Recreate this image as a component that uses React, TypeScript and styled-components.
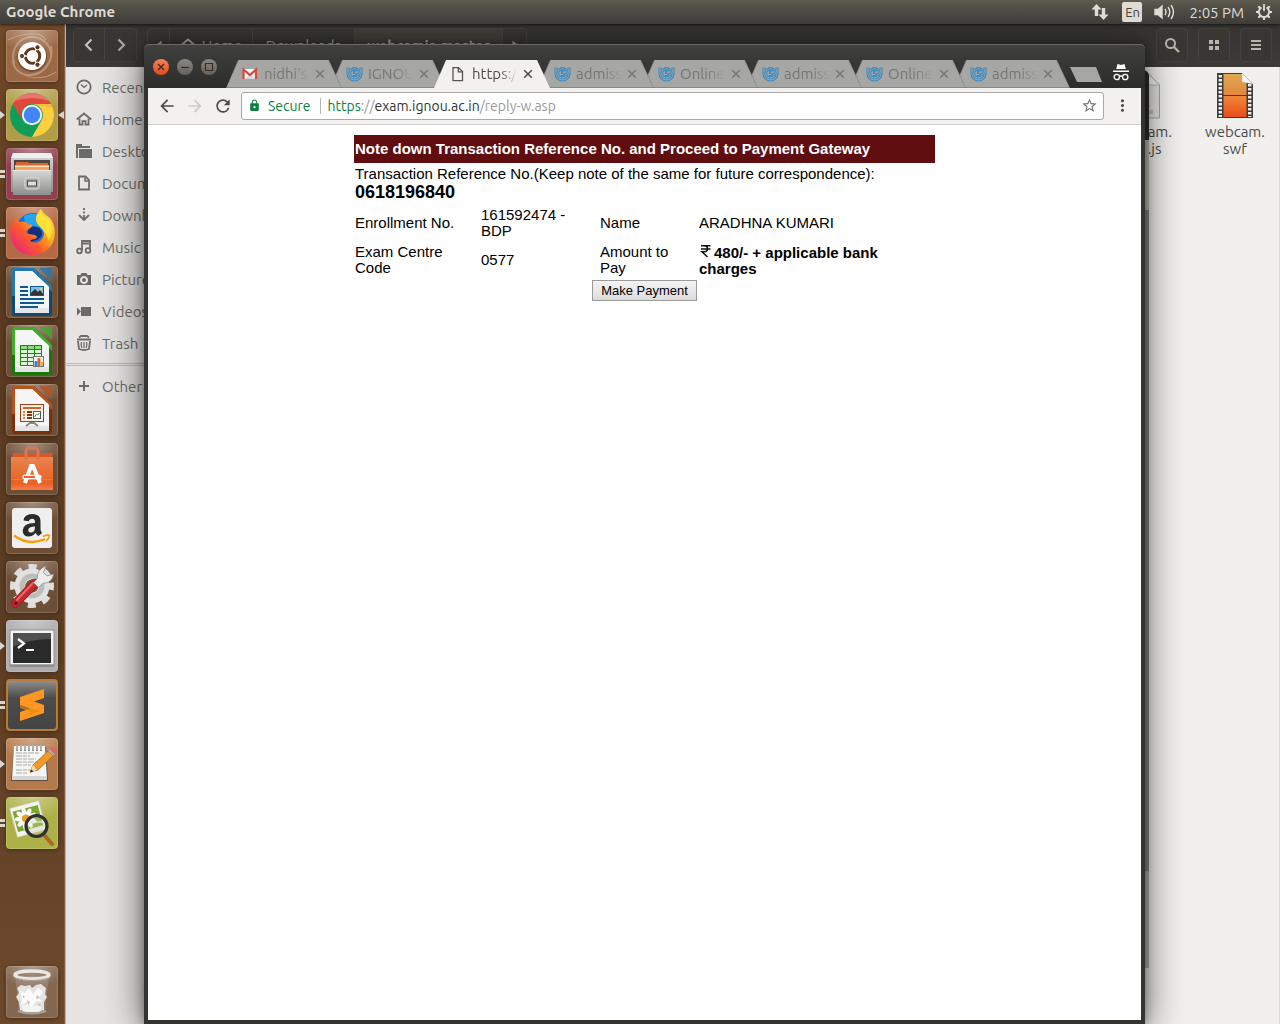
import React from "react";
import styled, { createGlobalStyle, css } from "styled-components";
import {
  MdArrowBack,
  MdArrowForward,
  MdLock,
  MdMoreVert,
  MdRefresh,
  MdStarBorder,
} from "react-icons/md";

const ui = `"Ubuntu", "Open Sans", "Noto Sans", sans-serif`;
const page = `"Liberation Sans", Arial, sans-serif`;

const GlobalStyle = createGlobalStyle`
  * { box-sizing: border-box; }
  body { margin: 0; font-family: ${ui}; font-size: 15px; overflow: hidden; }
  button { font-family: inherit; margin: 0; }
  svg { display: block; }
`;

/* ---------- desktop ---------- */

const Desktop = styled.div`
  position: relative;
  display: grid;
  grid-template-rows: 24px 1fr;
  height: 100vh;
  overflow: hidden;
  background: #f1f0ee;
`;

const TopPanel = styled.header`
  position: relative;
  z-index: 4;
  display: flex;
  align-items: center;
  padding: 0 8px 0 6px;
  color: #dfdbd2;
  background: linear-gradient(#5e5b50, #55524a 20%, #3d3c38);
  box-shadow: 0 1px 3px rgba(0, 0, 0, 0.6);
  line-height: 24px;
`;

const PanelTitle = styled.strong`
  flex: 1;
`;

const PanelItems = styled.div`
  display: flex;
  align-items: center;
`;

const PanelButton = styled.button<{ $gap: number }>`
  display: flex;
  align-items: center;
  height: 24px;
  padding: 0;
  margin-left: ${(p) => p.$gap}px;
  border: 0;
  background: none;
  color: inherit;
  font-size: 15px;
`;

const Keyboard = styled.span`
  width: 20px;
  height: 20px;
  border-radius: 2px;
  background: #dfdbd2;
  color: #45433d;
  font-size: 13px;
  line-height: 21px;
  text-align: center;
`;

const Workspace = styled.div`
  display: grid;
  grid-template-columns: 66px 1fr;
  min-height: 0;
`;

/* ---------- launcher ---------- */

const LauncherBar = styled.nav`
  display: flex;
  flex-direction: column;
  gap: 7px;
  padding: 6px 0 6px 6px;
  border-right: 1px solid #b9b2ab;
  box-shadow: inset -1px 0 #7e6149;
  background: linear-gradient(#744a29, #5a3a20 25%, #5c3c22 55%, #6d492c);
`;

const Tile = styled.button<{ $color: string; $rim?: string; $last?: boolean }>`
  position: relative;
  flex: none;
  width: 52px;
  height: 52px;
  padding: 0;
  border: 0;
  border-radius: 4px;
  margin-top: ${(p) => (p.$last ? "auto" : "0")};
  background:
    radial-gradient(ellipse 36px 22px at 50% 0, rgba(255, 255, 255, 0.4), rgba(255, 255, 255, 0.06)),
    ${(p) => p.$color};
  box-shadow:
    inset 0 0 0 ${(p) => (p.$rim ? 2 : 1)}px ${(p) => p.$rim ?? "rgba(255,255,255,0.16)"},
    0 1px 5px rgba(0, 0, 0, 0.35);
`;

const Marks = styled.span<{ $kind: "one" | "two" }>`
  position: absolute;
  left: -6px;
  top: 22px;
  width: 5px;
  height: 8px;
  ${(p) =>
    p.$kind === "one"
      ? css`
          background: #d9d5d0;
          clip-path: polygon(0 0, 100% 50%, 0 100%);
        `
      : css`
          border: solid #d9d5d0;
          border-width: 3px 0;
        `}
`;

const FocusMark = styled.span`
  position: absolute;
  right: -6px;
  top: 22px;
  width: 6px;
  height: 8px;
  background: #d9d5d0;
  clip-path: polygon(100% 0, 0 50%, 100% 100%);
`;

/* ---------- file manager ---------- */

const Files = styled.section`
  display: grid;
  grid-template-rows: 43px 1fr;
  min-width: 0;
`;

const FilesHeader = styled.div`
  display: flex;
  gap: 10px;
  padding: 4px 8px 5px 7px;
  color: #b8b5a8;
  background: linear-gradient(#353430, #3c3b37);
`;

const ButtonGroup = styled.div`
  display: flex;
  height: 34px;
  border: 1px solid #44423e;
  border-radius: 4px;
  background: #383733;
`;

const HeaderButton = styled.button<{ $width: number; $active?: boolean }>`
  display: flex;
  align-items: center;
  justify-content: center;
  gap: 6px;
  width: ${(p) => p.$width}px;
  padding: 0;
  border: 0;
  border-right: 1px solid #48463f;
  background: ${(p) => (p.$active ? "#41403a" : "none")};
  color: #aeaca1;
  font-size: 15px;
  font-weight: ${(p) => (p.$active ? 700 : 400)};
  &:last-child { border-right: 0; }
`;

const HeaderSpacer = styled.div`
  flex: 1;
`;

const SquareButton = styled.button`
  display: flex;
  align-items: center;
  justify-content: center;
  width: 32px;
  height: 34px;
  padding: 0;
  border: 1px solid #44423e;
  border-radius: 4px;
  background: #383733;
  color: #b8b5a8;
`;

const FilesBody = styled.div`
  display: grid;
  grid-template-columns: 200px 1fr;
`;

const Places = styled.ul`
  margin: 0;
  padding: 4px 0 0;
  list-style: none;
  background: #e6e5e3;
`;

const Place = styled.li<{ $divided?: boolean }>`
  ${(p) =>
    p.$divided &&
    css`
      margin-top: 4px;
      padding-top: 4px;
      border-top: 3px double #bdbbb8;
    `}
`;

const PlaceLink = styled.a`
  display: flex;
  align-items: center;
  gap: 10px;
  height: 32px;
  padding-left: 10px;
  color: #6b6b67;
  text-decoration: none;
  white-space: nowrap;
`;

const FileGrid = styled.div`
  display: flex;
  justify-content: flex-end;
  gap: 5px;
  padding: 5px 0 0;
  border-right: 1px solid #dcdad7;
  background: #f1f0ee;
`;

const FileItem = styled.figure`
  display: flex;
  flex-direction: column;
  align-items: center;
  gap: 4px;
  width: 88px;
  margin: 0;
  color: #4a4a48;
  line-height: 17px;
  text-align: center;
`;

/* ---------- windows ---------- */

const BackWindow = styled.div`
  position: absolute;
  z-index: 1;
  top: 70px;
  right: 131px;
  bottom: 56px;
  display: flex;
  flex-direction: column;
  width: 12px;
  border-radius: 0 6px 0 0;
  overflow: hidden;
`;

const Band = styled.span<{ $color: string; $height?: number }>`
  flex: ${(p) => (p.$height ? `0 0 ${p.$height}px` : "1")};
  background: ${(p) => p.$color};
`;

const Browser = styled.main`
  position: absolute;
  z-index: 2;
  inset: 44px 135px 0 144px;
  display: grid;
  grid-template-rows: 44px 37px 1fr;
  padding: 0 4px 4px 4px;
  border-radius: 5px 5px 0 0;
  background: #333330;
  box-shadow: 0 6px 38px rgba(0, 0, 0, 0.65), 0 0 10px rgba(0, 0, 0, 0.3);
`;

const TitleBar = styled.div`
  display: flex;
  align-items: flex-end;
  margin: 0 -4px;
  padding: 0 16px 0 9px;
  border-top: 1px solid #6a6966;
  border-radius: 5px 5px 0 0;
  background: linear-gradient(#40403e, #2c2c2a);
`;

const WindowButtons = styled.div`
  display: flex;
  gap: 8px;
  align-self: flex-end;
  margin-bottom: 13px;
`;

const WindowButton = styled.button<{ $close?: boolean }>`
  width: 16px;
  height: 16px;
  padding: 0;
  border: 0;
  border-radius: 50%;
  background: ${(p) =>
    p.$close ? "linear-gradient(#f4815c, #df4c1d)" : "linear-gradient(#8a8880, #64625b)"};
  color: #3a2a20;
`;

const TabStrip = styled.div`
  display: flex;
  margin-left: 9px;
`;

const Tab = styled.div<{ $active: boolean; $order: number }>`
  position: relative;
  z-index: ${(p) => (p.$active ? 20 : p.$order)};
  display: flex;
  align-items: center;
  width: 116px;
  height: 28px;
  margin-right: -12px;
  padding-left: 16px;
  background: ${(p) => (p.$active ? "#f2f1f0" : "#868684")};
  color: ${(p) => (p.$active ? "#4c4c4c" : "#757573")};
  clip-path: polygon(12px 0, calc(100% - 13px) 0, 100% 100%, 0 100%);
  &::before {
    content: "";
    position: absolute;
    z-index: -1;
    inset: 0 1px ${(p) => (p.$active ? 0 : 1)}px 1px;
    background: ${(p) => (p.$active ? "#f2f1f0" : "#a6a6a4")};
    clip-path: polygon(12px 0, calc(100% - 13px) 0, 100% 100%, 0 100%);
  }
`;

const TabLabel = styled.button`
  width: 50px;
  margin-left: 5px;
  padding: 0;
  border: 0;
  background: none;
  color: inherit;
  font-size: 15px;
  line-height: 20px;
  text-align: left;
  white-space: nowrap;
  mask-image: linear-gradient(90deg, #000 28px, transparent 45px);
`;

const TabClose = styled.button`
  margin-left: 1px;
  padding: 0;
  border: 0;
  background: none;
  color: inherit;
`;

const NewTab = styled.button`
  align-self: flex-end;
  width: 32px;
  height: 15px;
  margin: 0 0 6px 12px;
  padding: 0;
  border: 0;
  background: #a6a6a4;
  clip-path: polygon(0 0, 26px 0, 100% 100%, 7px 100%);
`;

const Incognito = styled.span`
  margin: 0 0 7px auto;
`;

const Toolbar = styled.div`
  display: flex;
  align-items: center;
  padding: 0 9px 1px 9px;
  border-bottom: 1px solid #cfcecc;
  background: #f2f1f0;
`;

const ToolButton = styled.button<{ $dim?: boolean }>`
  display: flex;
  justify-content: center;
  flex: none;
  width: 20px;
  margin-right: 8px;
  padding: 0;
  border: 0;
  background: none;
  color: ${(p) => (p.$dim ? "#cccbca" : "#4b4b4b")};
  &:last-child { margin: 0; }
`;

const Address = styled.div`
  display: flex;
  flex: 1;
  align-items: center;
  height: 28px;
  margin-right: 8px;
  padding: 0 5px 0 6px;
  border: 1px solid #a9a8a6;
  border-radius: 3px;
  background: #fff;
  color: #0b8043;
  font-size: 14px;
`;

const Secure = styled.span`
  margin-left: 7px;
  padding-right: 9px;
  border-right: 1px solid #b5b5b5;
  line-height: 16px;
`;

const Url = styled.div`
  flex: 1;
  margin-left: 7px;
  color: #9a9a9a;
  line-height: 20px;
  b { color: #333; font-weight: 400; }
  i { color: #0b8043; font-style: normal; }
`;

const StarButton = styled.button`
  padding: 0;
  border: 0;
  background: none;
  color: #757575;
`;

/* ---------- web page ---------- */

const Viewport = styled.div`
  padding: 10px 10px 0;
  overflow: auto;
  background: #fff;
`;

const Sheet = styled.table`
  width: 581px;
  max-width: 100%;
  margin: 0 auto;
  border-collapse: collapse;
  table-layout: fixed;
  color: #000;
  font-family: ${page};
  font-size: 15px;
  line-height: 16px;
  td, th { padding: 1px; text-align: left; font-weight: 400; }
`;

const Row = styled.tr<{ $height: number }>`
  height: ${(p) => p.$height}px;
`;

const Banner = styled.th`
  && { font-weight: 700; }
  background: #600d0f;
  color: #fff;
`;

const Reference = styled.b`
  display: block;
  font-size: 18px;
  line-height: 20px;
`;

const Amount = styled.b`
  svg { display: inline-block; margin-right: 1px; }
`;

const PayCell = styled.td`
  && { padding: 1px 0; text-align: center; }
`;

const PayButton = styled.button`
  && { font-family: ${page}; }
  height: 21px;
  padding: 0 8px;
  border: 1px solid #9a9a9a;
  border-radius: 0;
  background: linear-gradient(#f4f4f4, #dcdcdc);
  color: #000;
  font-size: 13px;
  line-height: 19px;
  vertical-align: top;
`;

/* ---------- drawings ---------- */

const Art = ({ children }: { children: React.ReactNode }) => (
  <svg width="52" height="52" viewBox="0 0 52 52" aria-hidden="true">
    {children}
  </svg>
);

const UbuntuArt = () => (
  <Art>
    <g fill="none" stroke="#fff" opacity=".28">
      <path d="M8 34C4 18 14 6 28 7c10 1 17 9 17 19" strokeWidth="2" />
      <path d="M45 16c3 14-6 28-20 29C14 46 7 38 7 30" strokeWidth="2" />
      <path d="M2 10C14 4 34 0 40 10M50 42c-12 8-30 8-38-2" strokeWidth="1.200" />
    </g>
    <circle cx="26" cy="27" r="15" fill="#3b220f" opacity=".35" />
    <circle cx="26" cy="26" r="14" fill="#fff" />
    <circle cx="26.500" cy="26" r="7.200" fill="none" stroke="#5c3a1f" strokeWidth="3" />
    <path d="M26.500 26H16M26.500 26l5-9M26.500 26l5 9" stroke="#fff" strokeWidth="1.300" />
    <circle cx="26.500" cy="26" r="5.700" fill="#fff" />
    <g fill="#5c3a1f" stroke="#fff">
      <circle cx="16" cy="26" r="2.600" />
      <circle cx="31.500" cy="17.300" r="2.600" />
      <circle cx="31.500" cy="34.700" r="2.600" />
    </g>
  </Art>
);

const ChromeArt = () => (
  <Art>
    <circle cx="26" cy="26" r="22" fill="#0f9d58" />
    <path d="M6.950 15A22 22 0 0 1 45.050 15H26a11 11 0 0 0-9.500 16.500z" fill="#e0483c" />
    <path d="M45.050 15A22 22 0 0 1 26 48l9.500-16.500A11 11 0 0 0 26 15z" fill="#ffcd40" />
    <path d="M26 15h19a22 22 0 0 1 2 4z" fill="#f1a92f" opacity=".5" />
    <path d="M9 12A22 22 0 0 1 43 12Q26 6 9 12z" fill="#fff" opacity=".25" />
    <circle cx="26" cy="26" r="10.200" fill="#f1f1f1" />
    <circle cx="26" cy="26" r="8.200" fill="#4285f4" />
  </Art>
);

const CabinetArt = () => (
  <Art>
    <defs>
      <linearGradient id="cab" x2="0" y2="1">
        <stop stopColor="#d8d8d6" />
        <stop offset="1" stopColor="#8e8e8c" />
      </linearGradient>
    </defs>
    <path d="M7 5h38l2 6v33H5V11z" fill="url(#cab)" />
    <path d="M7 5h38l2 5H5z" fill="#f0f0ee" />
    <path d="M8 12h36v10H8z" fill="#4a4542" />
    <path d="M10 14h12l1 1h19v7H9z" fill="#d8652b" />
    <path d="M9 17h34v5H9z" fill="#f5a55a" />
    <path d="M9 18.500h34" stroke="#fde3c0" />
    <path d="M7 22h38v25H7z" fill="url(#cab)" />
    <path d="M7 22.500h38" stroke="#ececea" />
    <rect x="19" y="30" width="14" height="11" rx="2" fill="#a9a9a7" stroke="#dededc" />
    <rect x="21.500" y="33" width="9" height="5" fill="#dedede" stroke="#444" />
  </Art>
);

const FirefoxArt = () => (
  <Art>
    <defs>
      <linearGradient id="fox" x1="1" y1="0" x2="0" y2="1">
        <stop stopColor="#fff44f" />
        <stop offset=".35" stopColor="#ffb31a" />
        <stop offset=".6" stopColor="#ff5a2a" />
        <stop offset="1" stopColor="#e0129a" />
      </linearGradient>
    </defs>
    <circle cx="27" cy="23" r="17" fill="#1673d6" />
    <path d="M18 9q10-5 18 1l-4 12-12 2z" fill="#25a5ee" />
    <path d="M22 20q14-3 14 8-5 8-14 6z" fill="#14307c" />
    <path
      d="M10 10c1 3 2 4 4 5 4-1 7 0 9 3 1-1 3-1 3 1-1 3-5 3-6 6 3 4 9 1 11 5-1 3-4 1-7 4 6 4 13 0 14-7 0-6-6-8-8-13-1-5 2-9 5-12 2 5 7 6 11 12 4 8 4 19-2 26-8 10-25 11-34 1C3 33 2 20 8 14z"
      fill="url(#fox)"
    />
    <path d="M35 3c1 5 6 7 9 12 3 8 2 14-2 19 0-9-8-12-11-18-2-5 1-10 4-13z" fill="#ffe83d" opacity=".85" />
  </Art>
);

const OfficeArt = ({ color, dark, children }: { color: string; dark: string; children: React.ReactNode }) => (
  <Art>
    <path d="M8 2h20l18 18v27a3 3 0 0 1-3 3H9a3 3 0 0 1-3-3V4z" fill={dark} />
    <path d="M8 2h20l18 18v6L27 6H9v24H6V4z" fill={color} />
    <path d="M33 2h13v13z" fill={color} opacity=".8" />
    <path d="M9 5h17l17 16v26H9z" fill="#f5f5f5" />
    <path d="M26 5l17 16-7-2-10-9z" fill="#fff" />
    <path d="M9 42h34v5H9z" fill="#d9d9d9" opacity=".6" />
    {children}
  </Art>
);

const WriterArt = () => (
  <OfficeArt color="#2478ae" dark="#0a4a78">
    <path d="M14 21h8M14 25h8M14 29h8M14 33h24M14 37h24M14 41h18" stroke="#0a5a94" strokeWidth="2" />
    <rect x="24.500" y="20.500" width="13" height="9" fill="#7cc0ea" stroke="#0a5a94" />
    <path d="M25 29v-2l4-4 3 3 2-2 3 4v1z" fill="#333" />
    <circle cx="35" cy="23" r="1.300" fill="#f5d040" />
  </OfficeArt>
);

const CalcArt = () => (
  <OfficeArt color="#3fae2a" dark="#177a08">
    <path d="M14 21h22v20H14z" fill="#dff5d8" />
    <path d="M14 21h22v4H14z" fill="#8fdc80" />
    <path d="M14.500 21v20M21.500 21v20M28.500 21v20M35.500 21v20M14 20.500h22M14 24.500h22M14 28.500h22M14 32.500h22M14 36.500h22M14 40.500h22" stroke="#178a08" />
    <rect x="27.500" y="31.500" width="10" height="10" fill="#fff" stroke="#777" />
    <path d="M30 41v-5" stroke="#2a86d0" strokeWidth="3" />
    <path d="M33 41v-8" stroke="#d8622a" strokeWidth="3" />
    <path d="M36 41v-4" stroke="#f0b020" strokeWidth="2" />
  </OfficeArt>
);

const ImpressArt = () => (
  <OfficeArt color="#b65420" dark="#7c3008">
    <rect x="14.500" y="20.500" width="23" height="17" fill="#fff4ec" stroke="#a0400c" />
    <path d="M17 24h18" stroke="#d8622a" strokeWidth="2" />
    <path d="M17 28h2M17 31h2M17 34h2" stroke="#e08850" strokeWidth="2" />
    <path d="M21 28h5M21 31h5M21 34h5" stroke="#8a3508" strokeWidth="2" />
    <rect x="27.500" y="27.500" width="7" height="7" fill="#fff" stroke="#555" />
    <path d="M28.500 33l2-3 1 1 2-2" stroke="#3a9c30" fill="none" />
    <path d="M26 38v2M20 42l4-3h4l4 3" stroke="#888" strokeWidth="2" fill="none" />
  </OfficeArt>
);

const SoftwareArt = () => (
  <Art>
    <defs>
      <linearGradient id="bag" x2="0" y2="1">
        <stop stopColor="#e8844e" />
        <stop offset=".8" stopColor="#ea6024" />
        <stop offset="1" stopColor="#f5804c" />
      </linearGradient>
    </defs>
    <path d="M7 10h40l-2 6H6z" fill="#d8562a" />
    <path d="M5 14h42v33H5z" fill="url(#bag)" />
    <path d="M5 36h42v1H5z" fill="#f58c5c" opacity=".5" />
    <path d="M20 17V9q0-4 4-4h4q4 0 4 4v8" stroke="#d97550" strokeWidth="3" fill="none" />
    <path d="M19 40l6-17h2l7 17" fill="none" stroke="#fff" strokeWidth="4" />
    <path d="M18.500 34h15" stroke="#fff" strokeWidth="4.500" strokeLinecap="round" />
    <path d="M18 34h11" stroke="#e8652f" strokeWidth="2" />
  </Art>
);

const AmazonArt = () => (
  <Art>
    <rect x="6" y="6" width="40" height="40" rx="3" fill="#efefef" />
    <path d="M17.500 18.500q.8-6.500 8.700-6.500 8.300 0 8.300 7v8q0 2.500 1.500 4l-3.500 3q-2-1-2.900-3.200-2.600 3.600-6.900 3.600-6 0-6-6 0-7 12.200-7.400v-1.500q0-2.800-2.800-2.800t-3.300 2.600zM28.900 24.400q-6.600 0-6.600 3.700 0 2.500 2.500 2.500 4.100 0 4.100-4.800z" fill="#2b2b2b" />
    <path d="M8 33.500q15 11 31 3.500" stroke="#f90" strokeWidth="2.400" fill="none" />
    <path d="M37 34.500q4-2 6.500-1-.5 3.500-3.500 5.500" stroke="#f90" strokeWidth="1.600" fill="none" />
  </Art>
);

const SettingsArt = () => (
  <Art>
    <circle cx="26" cy="25" r="19" fill="none" stroke="#dededc" strokeWidth="6" strokeDasharray="8 6.920" strokeDashoffset="4" />
    <circle cx="26" cy="25" r="12" fill="none" stroke="#e2e2e0" strokeWidth="11" />
    <circle cx="26" cy="25" r="10" fill="none" stroke="#bdbdba" strokeWidth="5" />
    <circle cx="26" cy="25" r="6.500" fill="#7b5638" />
    <path d="M9.500 42.500L29 22" stroke="#8d1a20" strokeWidth="8.500" strokeLinecap="round" />
    <path d="M9.500 42.500L29 22" stroke="#c5282f" strokeWidth="7" strokeLinecap="round" />
    <path d="M11 39l16-17" stroke="#e8686a" strokeWidth="2" strokeLinecap="round" />
    <path d="M31 18q0-10 9-13l-2.500 6.500 3.500 3.500 6.500-2q-1 9-11 9.500l-4 4-5-5z" fill="#ececea" stroke="#8d8d8a" strokeWidth=".8" />
    <circle cx="9.800" cy="42.300" r="1.800" fill="#6c1014" />
  </Art>
);

const TerminalArt = () => (
  <Art>
    <path d="M4 10h44v35H4z" fill="#f5f5f5" stroke="#8e8e8e" />
    <path d="M4 44.500h44V47H4z" fill="#8c8c8c" />
    <path d="M7 13h38v30H7z" fill="#2a2a2a" />
    <path d="M7 13h38v6q-22 0-38 8z" fill="#6a6a6a" opacity=".6" />
    <path d="M12 19l6 4.500-6 4.500M20 30h8" stroke="#fff" strokeWidth="2.200" fill="none" />
  </Art>
);

const SublimeArt = () => (
  <Art>
    <defs>
      <linearGradient id="subl" x2="0" y2="1">
        <stop stopColor="#8d8d8d" />
        <stop offset=".35" stopColor="#4c4c4c" />
        <stop offset="1" stopColor="#444" />
      </linearGradient>
    </defs>
    <rect x="2" y="2" width="48" height="48" rx="3" fill="url(#subl)" />
    <path d="M14 18l24-8v9l-10 3.500L38 26v8l-24 8v-9l10-3.500L14 26z" fill="#ff9721" />
    <path d="M24 29.500L14 26v3l14 5 6-2z" fill="#e58410" opacity=".7" />
  </Art>
);

const EditorArt = () => (
  <Art>
    <path d="M8 9h32l2 34H5z" fill="#444" opacity=".8" />
    <path d="M8 8h31l2 33H6z" fill="#f6f6f4" />
    <path d="M6 38h35v4H6z" fill="#d6d6d2" />
    <path d="M10 15h24M10 18h14M10 21h20M10 24h22M10 27h15M10 32h18M10 35h12" stroke="#a8a8a8" strokeWidth="1" strokeDasharray="6 1 4 1" />
    <path d="M11 7v6M15 7v6M19 7v6M23 7v6M27 7v6M31 7v6M35 7v6" stroke="#8a8a8a" strokeWidth="2" />
    <path d="M11 7v5M15 7v5M19 7v5M23 7v5M27 7v5M31 7v5M35 7v5" stroke="#eee" strokeWidth=".8" />
    <path d="M24 34l3-7 15-14 5 5-15 14z" fill="#f09a2c" stroke="#a65d10" strokeWidth=".7" />
    <path d="M24 34l3-7 4 5z" fill="#f4dcb0" />
    <path d="M24 34.500l1.300-3 2 2z" fill="#222" />
    <path d="M42 13l2-2 5 5-2 2z" fill="#aaa" />
    <path d="M44 11q3-3 5.500-.5T49 16z" fill="#e0606c" />
  </Art>
);

const ViewerArt = () => (
  <Art>
    <g transform="rotate(-15 22 22)">
      <rect x="7" y="7" width="30" height="30" fill="#f4f4ee" stroke="#c8c8bc" strokeWidth=".6" />
      <rect x="9" y="11" width="26" height="21" fill="#7ba832" />
      <g fill="#fff">
        {[0, 40, 80, 120, 160, 200, 240, 280, 320].map((a) => (
          <ellipse key={a} cx="20" cy="14.500" rx="2.300" ry="4.500" transform={`rotate(${a} 20 21)`} />
        ))}
      </g>
      <circle cx="20" cy="21" r="4" fill="#e8a020" />
    </g>
    <path d="M39 39l7 8" stroke="#a66a24" strokeWidth="4" strokeLinecap="round" />
    <circle cx="30.500" cy="29" r="10.500" fill="#c8d0a8" fillOpacity=".35" stroke="#2c3033" strokeWidth="3.200" />
    <path d="M23 29q4-5 14-4" stroke="#fff" strokeWidth="2" opacity=".5" fill="none" />
  </Art>
);

const TrashArt = () => (
  <Art>
    <path d="M9 10h34l-4 36q-13 4-26 0z" fill="#fff" opacity=".14" />
    <path d="M11 22l4-3 4 1 5-1 2 3 4-3 5-1 5 4-1 6 2 3-3 5v8q-12 5-24 0l-1-8-3-5 3-4z" fill="#e3e4e0" />
    <path d="M14 24l5 3 4-5 4 6 5-6 5 4-4 5 3 5-6-1-4 7-5-6-7 4 2-7z" fill="#fafaf8" />
    <path d="M16 40l5-2 4 3 6-2 4 2-1 5H17z" fill="#f4f4f2" />
    <path d="M21 34l3 2-2 3zM31 29l3 3-4 1zM17 29l2 2-2 1zM33 37l2 2-3 1z" fill="#bfc1bb" />
    <path d="M12 45q14 5 28 0" stroke="#a3a39f" strokeWidth="2" fill="none" />
    <ellipse cx="26" cy="9" rx="17" ry="4" fill="none" stroke="#e8e8e6" strokeWidth="3.400" />
    <path d="M9 12q17 5 34 0" stroke="#9b9b98" strokeWidth="1" fill="none" />
  </Art>
);

const Glyph = ({ size = 16, children, fill = "none" }: { size?: number; fill?: string; children: React.ReactNode }) => (
  <svg width={size} height={size} viewBox="0 0 16 16" fill={fill} stroke={fill === "none" ? "currentColor" : "none"} strokeWidth="1.8" aria-hidden="true">
    {children}
  </svg>
);

const HomeGlyph = () => (
  <Glyph>
    <path d="M.8 8.500L8 2.500l7.200 6" />
    <path d="M3.500 7.500V13.600h3v-3.500h3v3.500h3V7.500" />
  </Glyph>
);

const IgnouIcon = () => (
  <svg width="17" height="16" viewBox="0 0 17 16" fill="none" stroke="#2f8dcb" strokeWidth="1.100" aria-hidden="true">
    <path d="M1 1v6.500a7.500 7.500 0 0 0 15 0V1" />
    <path d="M3 1.500V4M14 1.500V4" />
    <circle cx="8.500" cy="7.300" r="5.700" />
    <circle cx="8.500" cy="7.300" r="3.700" />
    <path d="M10.300 5H7.500v2.200q3-.4 3 1.300T7 9.500" strokeWidth="1.300" />
  </svg>
);

const GmailIcon = () => (
  <svg width="17" height="16" viewBox="0 0 17 16" aria-hidden="true">
    <path d="M2 3h11v10H2z" fill="#f3f3f3" />
    <path d="M3 13l5-5 5 5z" fill="#dadada" />
    <path d="M1.500 13V3.500l6.500 5.500 6-5.500V13" fill="none" stroke="#d8483e" strokeWidth="2.200" />
  </svg>
);

const PageIcon = () => (
  <svg width="17" height="16" viewBox="0 0 17 16" fill="none" stroke="#555" strokeWidth="1.300" aria-hidden="true">
    <path d="M3 1.600h5.500l4 4v9H3z" />
    <path d="M8.300 1.600v4.200h4.200" />
  </svg>
);

const CloseGlyph = () => (
  <svg width="10" height="10" viewBox="0 0 10 10" stroke="currentColor" strokeWidth="1.500" aria-hidden="true">
    <path d="M1.200 1.200l7.600 7.600M8.800 1.200L1.200 8.800" />
  </svg>
);

const RupeeIcon = () => (
  <svg width="14" height="14" viewBox="0 0 14 14" fill="none" stroke="#111" strokeWidth="1.500" aria-hidden="true">
    <path d="M2 1.800h9.500M2 5h9.500M2 1.800h3q3.500 0 3.500 3t-3.500 3H3L8.500 13" />
  </svg>
);

/* ---------- data ---------- */

type App = { name: string; color: string; art: React.ReactNode; marks?: "one" | "two"; focus?: boolean; rim?: string };

const apps: App[] = [
  { name: "Search your computer", color: "#95603a", art: <UbuntuArt /> },
  { name: "Google Chrome", color: "#ac963c", art: <ChromeArt />, marks: "one", focus: true },
  { name: "Files", color: "#8a3444", art: <CabinetArt />, marks: "two" },
  { name: "Firefox Web Browser", color: "#b0603a", art: <FirefoxArt />, marks: "two" },
  { name: "LibreOffice Writer", color: "#65442a", art: <WriterArt /> },
  { name: "LibreOffice Calc", color: "#65442a", art: <CalcArt /> },
  { name: "LibreOffice Impress", color: "#65442a", art: <ImpressArt /> },
  { name: "Ubuntu Software", color: "#65442a", art: <SoftwareArt /> },
  { name: "Amazon", color: "#65442a", art: <AmazonArt /> },
  { name: "System Settings", color: "#65442a", art: <SettingsArt /> },
  { name: "Terminal", color: "#a9a5a8", art: <TerminalArt />, marks: "one" },
  { name: "Sublime Text", color: "#b87b38", art: <SublimeArt />, marks: "two", rim: "#b87b38" },
  { name: "Text Editor", color: "#b0713f", art: <EditorArt />, marks: "one" },
  { name: "Image Viewer", color: "#a9ac3c", art: <ViewerArt />, marks: "two" },
];

const places: { name: string; icon: React.ReactNode }[] = [
  { name: "Recent", icon: <Glyph><circle cx="8" cy="8" r="6.700" /><path d="M5 5.500l3 2.800 3-2.300" strokeWidth="1.300" /></Glyph> },
  { name: "Home", icon: <HomeGlyph /> },
  { name: "Desktop", icon: <Glyph fill="currentColor"><path d="M0 1h6v2h8v2H2v10H0zM3 6h13v9H3z" /></Glyph> },
  { name: "Documents", icon: <Glyph><path d="M3 1.500h6.500L13 5v9.500H3z" /><path d="M9 1.500V6h4" strokeWidth="1.500" /></Glyph> },
  { name: "Downloads", icon: <Glyph><path d="M8 1v2M8 4.500v2M8 8v5M3 8l5 5 5-5" /></Glyph> },
  { name: "Music", icon: <Glyph><circle cx="3.500" cy="12" r="2.300" /><circle cx="12" cy="11.500" r="2.300" /><path d="M6 12V2h8v9.500M6 4.500h8" /></Glyph> },
  { name: "Pictures", icon: <Glyph fill="currentColor"><path fillRule="evenodd" d="M1 4h3.500l1-2h5l1 2H15v10H1zM8 5a4 4 0 1 0 .01 0zM8 7a2 2 0 1 1-.01 0z" /></Glyph> },
  { name: "Videos", icon: <Glyph fill="currentColor"><path d="M5 4h10v9H5zM1 4.500l4 4-4 4z" /></Glyph> },
  { name: "Trash", icon: <Glyph><path d="M1 4.500h14M3 2.500l2-1.500h6l2 1.500M2 6l1 8q5 2 10 0l1-8" /><path d="M5.500 7q-1 3 .5 6M10.500 7q1 3-.5 6M8 7v6" strokeWidth="1.300" /></Glyph> },
];

const tabs = [
  { title: "nidhi's", icon: <GmailIcon /> },
  { title: "IGNOU", icon: <IgnouIcon /> },
  { title: "https:/", icon: <PageIcon />, active: true },
  { title: "admiss", icon: <IgnouIcon /> },
  { title: "Online", icon: <IgnouIcon /> },
  { title: "admiss", icon: <IgnouIcon /> },
  { title: "Online", icon: <IgnouIcon /> },
  { title: "admiss", icon: <IgnouIcon /> },
];

/* ---------- sections ---------- */

const Panel = () => (
  <TopPanel>
    <PanelTitle>Google Chrome</PanelTitle>
    <PanelItems>
      <PanelButton $gap={0} aria-label="Network">
        <svg width="18" height="16" viewBox="0 0 18 16" fill="#dfdbd2">
          <path d="M5.500 0l5 5.500H7.200V12H3.800V5.500H.500zM12.500 16l-5-5.500h3.300V4h3.400v6.500h3.300z" />
        </svg>
      </PanelButton>
      <PanelButton $gap={13} aria-label="Keyboard layout"><Keyboard>En</Keyboard></PanelButton>
      <PanelButton $gap={12} aria-label="Volume">
        <svg width="22" height="16" viewBox="0 0 22 16" fill="none" stroke="#dfdbd2" strokeWidth="1.400">
          <path d="M1 5.500h3L8 2v12l-4-3.500H1z" fill="#dfdbd2" />
          <path d="M11 5q2 3 0 6M14 3q3.500 5 0 10M17 1q5 7 0 14" />
        </svg>
      </PanelButton>
      <PanelButton $gap={13}>2:05 PM</PanelButton>
      <PanelButton $gap={12} aria-label="System menu">
        <svg width="16" height="16" viewBox="0 0 16 16" fill="none" stroke="#dfdbd2">
          <path d="M5.500 3.300a5.200 5.200 0 1 0 5 0" strokeWidth="2" />
          <path d="M8 0v7" strokeWidth="1.800" />
          <path d="M2.300 2.300l2 2M13.700 2.300l-2 2M0 8h2.500M16 8h-2.500M2.300 13.700l2-2M13.700 13.700l-2-2M8 16v-2.500" strokeWidth="2" />
        </svg>
      </PanelButton>
    </PanelItems>
  </TopPanel>
);

const Launcher = () => (
  <LauncherBar aria-label="Launcher">
    {apps.map((a) => (
      <Tile key={a.name} $color={a.color} $rim={a.rim} aria-label={a.name}>
        {a.art}
        {a.marks && <Marks $kind={a.marks} />}
        {a.focus && <FocusMark />}
      </Tile>
    ))}
    <Tile $color="#7d5c43" $last aria-label="Trash"><TrashArt /></Tile>
  </LauncherBar>
);

const FileManager = () => (
  <Files aria-label="File manager">
    <FilesHeader>
      <ButtonGroup>
        <HeaderButton $width={31} aria-label="Back"><Glyph><path d="M10.500 2.500L5 8l5.500 5.500" strokeWidth="2.200" stroke="#c4c1b4" /></Glyph></HeaderButton>
        <HeaderButton $width={31} aria-label="Forward"><Glyph><path d="M5.500 2.500L11 8l-5.500 5.500" strokeWidth="2.200" /></Glyph></HeaderButton>
      </ButtonGroup>
      <ButtonGroup>
        <HeaderButton $width={22} aria-label="Earlier folders"><Glyph size={10} fill="currentColor"><path d="M12 1v14L3 8z" /></Glyph></HeaderButton>
        <HeaderButton $width={83}><HomeGlyph />Home</HeaderButton>
        <HeaderButton $width={102}>Downloads</HeaderButton>
        <HeaderButton $width={148} $active>webcamjs-master</HeaderButton>
        <HeaderButton $width={23} aria-label="Later folders"><Glyph size={10} fill="currentColor"><path d="M4 1v14l9-7z" /></Glyph></HeaderButton>
      </ButtonGroup>
      <HeaderSpacer />
      <SquareButton aria-label="Search"><Glyph><circle cx="6.500" cy="6.500" r="4.500" strokeWidth="2" /><path d="M10 10l5 5" strokeWidth="2.400" /></Glyph></SquareButton>
      <SquareButton aria-label="Grid view"><Glyph fill="currentColor"><path d="M3 3h4v4H3zM9 3h4v4H9zM3 9h4v4H3zM9 9h4v4H9z" /></Glyph></SquareButton>
      <SquareButton aria-label="Menu"><Glyph><path d="M3 4h10M3 8h10M3 12h10" strokeWidth="2" /></Glyph></SquareButton>
    </FilesHeader>
    <FilesBody>
      <Places>
        {places.map((p) => (
          <Place key={p.name}><PlaceLink href="#">{p.icon}{p.name}</PlaceLink></Place>
        ))}
        <Place $divided>
          <PlaceLink href="#"><Glyph><path d="M8 3v10M3 8h10" strokeWidth="2" /></Glyph>Other Locations</PlaceLink>
        </Place>
      </Places>
      <FileGrid>
        <FileItem>
          <svg width="36" height="47" viewBox="0 0 36 47" aria-hidden="true">
            <path d="M.5 1.500H24L35.500 13v33H.5z" fill="#e4e4e2" stroke="#a5a5a3" />
            <path d="M24 1.500V13h11.500z" fill="#f7f7f5" stroke="#b5b5b3" />
            <path d="M6 34h20M6 39h23" stroke="#d8808c" />
            <path d="M6 36.500h16M6 41h23" stroke="#6ea6c8" />
          </svg>
          <figcaption>webcam.<br />min.js</figcaption>
        </FileItem>
        <FileItem>
          <svg width="36" height="47" viewBox="0 0 36 47" aria-hidden="true">
            <defs>
              <linearGradient id="film" x2="0" y2="1">
                <stop stopColor="#e0a850" />
                <stop offset=".45" stopColor="#e08a40" />
                <stop offset=".55" stopColor="#f08438" />
                <stop offset="1" stopColor="#e84c18" />
              </linearGradient>
            </defs>
            <path d="M0 1h25l11 11v34H0z" fill="#3b3b39" />
            <path d="M6.500 2h19l4 9v34h-23z" fill="url(#film)" />
            <path d="M3.300 3v42M32.700 12v33" stroke="#eee" strokeWidth="3.400" strokeDasharray="2.400 1.600" />
            <path d="M6 23.500h24" stroke="#3b3b39" />
            <path d="M25 1l11 11-11-2z" fill="#f5f5f3" stroke="#bbb" strokeWidth=".5" />
          </svg>
          <figcaption>webcam.<br />swf</figcaption>
        </FileItem>
      </FileGrid>
    </FilesBody>
  </Files>
);

const ExamPage = () => (
  <Viewport>
    <Sheet>
      <colgroup>
        <col style={{ width: 126 }} />
        <col style={{ width: 119 }} />
        <col style={{ width: 99 }} />
        <col />
      </colgroup>
      <tbody>
        <Row $height={28}>
          <Banner colSpan={4}>Note down Transaction Reference No. and Proceed to Payment Gateway</Banner>
        </Row>
        <Row $height={41}>
          <td colSpan={4}>
            Transaction Reference No.(Keep note of the same for future correspondence):
            <Reference>0618196840</Reference>
          </td>
        </Row>
        <Row $height={37}>
          <th scope="row">Enrollment No.</th>
          <td>161592474 - BDP</td>
          <th scope="row">Name</th>
          <td>ARADHNA KUMARI</td>
        </Row>
        <Row $height={38}>
          <th scope="row">Exam Centre Code</th>
          <td>0577</td>
          <th scope="row">Amount to Pay</th>
          <td><Amount><RupeeIcon />480/- + applicable bank charges</Amount></td>
        </Row>
        <tr>
          <PayCell colSpan={4}><PayButton type="button">Make Payment</PayButton></PayCell>
        </tr>
      </tbody>
    </Sheet>
  </Viewport>
);

const BrowserWindow = () => (
  <Browser>
    <TitleBar>
      <WindowButtons>
        <WindowButton $close aria-label="Close window"><Glyph><path d="M5 5l6 6M11 5l-6 6" strokeWidth="1.300" /></Glyph></WindowButton>
        <WindowButton aria-label="Minimize"><Glyph><path d="M4 8.500h8" strokeWidth="1.200" /></Glyph></WindowButton>
        <WindowButton aria-label="Maximize"><Glyph><path d="M4.500 4.500h7v7h-7z" strokeWidth="1.200" /></Glyph></WindowButton>
      </WindowButtons>
      <TabStrip>
        {tabs.map((t, i) => (
          <Tab key={i} $active={!!t.active} $order={tabs.length - i}>
            {t.icon}
            <TabLabel>{t.title}</TabLabel>
            <TabClose aria-label="Close tab"><CloseGlyph /></TabClose>
          </Tab>
        ))}
      </TabStrip>
      <NewTab aria-label="New tab" />
      <Incognito>
        <svg width="16" height="17" viewBox="0 0 16 17" fill="#fff" aria-hidden="true">
          <path d="M4.500 0l3.500 1 3.500-1 1.300 5H3.200zM0 6.500h16V8H0z" />
          <g fill="none" stroke="#fff" strokeWidth="1.300">
            <circle cx="3.800" cy="13" r="2.700" />
            <circle cx="12.200" cy="13" r="2.700" />
            <path d="M6.500 12.500q1.500-1 3 0" />
          </g>
        </svg>
      </Incognito>
    </TitleBar>
    <Toolbar>
      <ToolButton aria-label="Back"><MdArrowBack size={20} /></ToolButton>
      <ToolButton $dim aria-label="Forward"><MdArrowForward size={20} /></ToolButton>
      <ToolButton aria-label="Reload"><MdRefresh size={20} /></ToolButton>
      <Address>
        <MdLock size={13} />
        <Secure>Secure</Secure>
        <Url><i>https</i>://<b>exam.ignou.ac.in</b>/reply-w.asp</Url>
        <StarButton aria-label="Bookmark this page"><MdStarBorder size={17} /></StarButton>
      </Address>
      <ToolButton aria-label="Chrome menu"><MdMoreVert size={19} /></ToolButton>
    </Toolbar>
    <ExamPage />
  </Browser>
);

export default function App() {
  return (
    <>
      <GlobalStyle />
      <Desktop>
        <Panel />
        <Workspace>
          <Launcher />
          <FileManager />
        </Workspace>
        <BackWindow aria-hidden="true">
          <Band $color="#2f2f2d" $height={70} />
          <Band $color="#c4c2be" $height={70} />
          <Band $color="#8d8d8b" />
          <Band $color="#b9b7b4" $height={97} />
        </BackWindow>
        <BrowserWindow />
      </Desktop>
    </>
  );
}
